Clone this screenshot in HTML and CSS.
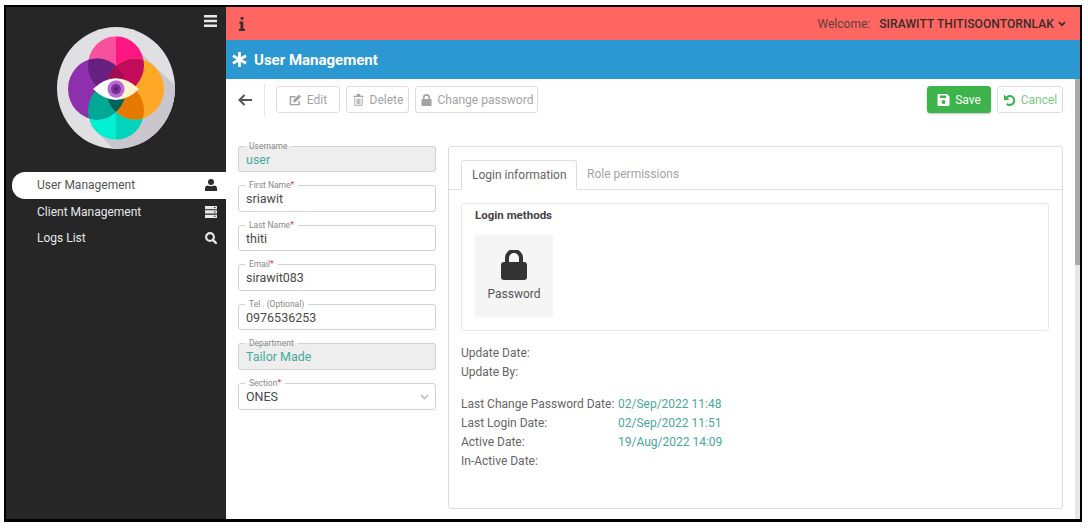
FILE: index.html
```html
<!DOCTYPE html>
<html lang="en">
<head>
  <meta charset="UTF-8">
  <meta name="viewport" content="width=device-width, initial-scale=1.0">
  <title>User Management</title>
  <link rel="stylesheet" href="styles.css">
</head>
<body>
  <div class="frame">
    <aside class="sidebar">
      <div class="burger-row">
        <svg class="burger" viewBox="0 0 13 12"><path d="M0 0h13v2.4H0zM0 4.8h13v2.4H0zM0 9.600h13V12H0z" fill="#e8e8e8"/></svg>
      </div>
      <svg class="logo" viewBox="0 0 118 118" preserveAspectRatio="none">
        <defs>
          <clipPath id="disc"><circle cx="59" cy="59" r="59"/></clipPath>
          <clipPath id="cTop"><ellipse cx="59" cy="37" rx="28" ry="28"/></clipPath>
          <clipPath id="cBottom"><ellipse cx="59" cy="81" rx="28" ry="28"/></clipPath>
          <clipPath id="cLeft"><ellipse cx="40" cy="60" rx="29" ry="29.500"/></clipPath>
        </defs>
        <circle cx="59" cy="59" r="59" fill="#e0e0e3"/>
        <polygon clip-path="url(#disc)" points="86,27 130,68 130,130 70,131 33,95" fill="#c9c7cd"/>
        <rect x="31" y="9" width="28" height="56" fill="#f8509c" clip-path="url(#cTop)"/>
        <rect x="59" y="9" width="28" height="56" fill="#ff1683" clip-path="url(#cTop)"/>
        <rect x="31" y="53" width="28" height="56" fill="#00f0d2" clip-path="url(#cBottom)"/>
        <rect x="59" y="53" width="28" height="56" fill="#00d4ba" clip-path="url(#cBottom)"/>
        <ellipse cx="40" cy="60" rx="29" ry="29.500" fill="#8e30ae"/>
        <ellipse cx="78" cy="60" rx="29" ry="29.500" fill="#ffa726"/>
        <g clip-path="url(#cTop)">
          <ellipse cx="40" cy="60" rx="29" ry="29.500" fill="#66207f"/>
          <ellipse cx="78" cy="60" rx="29" ry="29.500" fill="#c40c5c"/>
          <g clip-path="url(#cLeft)"><ellipse cx="78" cy="60" rx="29" ry="29.500" fill="#a30c50"/></g>
        </g>
        <g clip-path="url(#cBottom)">
          <ellipse cx="40" cy="60" rx="29" ry="29.500" fill="#00a896"/>
          <ellipse cx="78" cy="60" rx="29" ry="29.500" fill="#e67a00"/>
          <g clip-path="url(#cLeft)"><ellipse cx="78" cy="60" rx="29" ry="29.500" fill="#00625f"/></g>
        </g>
        <path d="M36 60Q47 49.500 59 49.500V70.500Q47 70.500 36 60Z" fill="#fff"/>
        <path d="M59 49.500Q71 49.500 82 60Q71 70.500 59 70.500Z" fill="#fff4d0"/>
        <circle cx="59" cy="60" r="8.500" fill="#b86ad6"/>
        <circle cx="59" cy="60" r="5" fill="#7a3098"/>
        <circle cx="59" cy="60" r="2" fill="#5a1f78"/>
      </svg>
      <nav class="nav">
        <a class="nav-item active">User Management
          <svg class="nav-icon" viewBox="0 0 12 12"><circle cx="6" cy="3" r="3" fill="#2b2b2b"/><path d="M0 12V9.200Q0 6.600 2.500 6.400Q6 8 9.500 6.400Q12 6.600 12 9.200V12Z" fill="#2b2b2b"/></svg>
        </a>
        <a class="nav-item">Client Management
          <svg class="nav-icon" viewBox="0 0 12 12"><path d="M0 0h12v3.300H0zM0 4.300h12v3.300H0zM0 8.700h12V12H0z" fill="#e8e8e8"/><path d="M9 1h1.500v1H9zM9 5.400h1.500v1H9zM9 9.800h1.500v1H9z" fill="#262626"/></svg>
        </a>
        <a class="nav-item">Logs List
          <svg class="nav-icon" viewBox="0 0 12 12"><circle cx="5" cy="5" r="3.900" fill="none" stroke="#e8e8e8" stroke-width="2.100"/><path d="M7.800 7.800 11 11" stroke="#e8e8e8" stroke-width="2.400" stroke-linecap="round"/></svg>
        </a>
      </nav>
    </aside>

    <main class="main">
      <header class="topbar">
        <svg class="info" viewBox="0 0 6 14"><path d="M1.600 0h2.800v2.800H1.600zM.4 4.500h3.900v7.300H6V14H0v-2.200h1.500V6.700H.4z" fill="#3a2c2c"/></svg>
        <span class="welcome">Welcome:</span>
        <b class="username">SIRAWITT THITISOONTORNLAK</b>
        <svg class="caret" viewBox="0 0 8 6"><path d="M1 1.200 4 4.200 7 1.200" fill="none" stroke="#3a2c2c" stroke-width="1.700"/></svg>
      </header>
      <div class="titlebar">
        <svg class="asterisk" viewBox="0 0 14 14"><path d="M7 0v14M.9 3.500 13.100 10.500M13.100 3.500 .9 10.500" stroke="#fff" stroke-width="2.600"/></svg>
        <span>User Management</span>
      </div>

      <div class="body">
        <div class="content">
          <div class="toolbar">
            <svg class="back" viewBox="0 0 14 12"><path d="M6.500 1 1.500 6 6.500 11M2 6H14" fill="none" stroke="#555" stroke-width="2"/></svg>
            <span class="divider"></span>
            <button class="btn edit">
              <svg class="btn-icon" viewBox="0 0 14 13"><path d="M11 7.500V11.500H1.500V3H7" fill="none" stroke="#a3a3a3" stroke-width="1.600"/><path d="M4.500 9.200 5 6.300 10.700.6 13 2.900 7.300 8.600Z" fill="#a3a3a3"/></svg>
              Edit
            </button>
            <button class="btn delete">
              <svg class="btn-icon" viewBox="0 0 11 13"><path d="M0 2h11v1.300H0zM3.500 0h4v2h-4z" fill="#a3a3a3"/><path d="M1.500 4v8.300h8V4M4 5v6M5.500 5v6M7 5v6" fill="none" stroke="#a3a3a3" stroke-width="1"/></svg>
              Delete
            </button>
            <button class="btn password">
              <svg class="btn-icon" viewBox="0 0 11 13"><rect y="5.500" width="11" height="7.500" rx="1" fill="#a3a3a3"/><path d="M2.500 6V4a3 3 0 0 1 6 0v2" fill="none" stroke="#a3a3a3" stroke-width="1.800"/></svg>
              Change password
            </button>
            <button class="btn save">
              <svg class="btn-icon" viewBox="0 0 12 12"><path d="M1 0h8.500L12 2.500V11a1 1 0 0 1-1 1H1a1 1 0 0 1-1-1V1a1 1 0 0 1 1-1Z" fill="#fff"/><rect x="2.500" y="1.500" width="6" height="2.500" fill="#3cb44b"/><circle cx="6" cy="8" r="2" fill="#3cb44b"/></svg>
              Save
            </button>
            <button class="btn cancel">
              <svg class="btn-icon" viewBox="0 0 13 13"><path d="M3 4.200A4.800 4.800 0 1 1 3.500 10.500" fill="none" stroke="#3cb44b" stroke-width="2.200"/><path d="M.5 .5v6h6z" fill="#3cb44b"/></svg>
              Cancel
            </button>
          </div>

          <div class="columns">
            <form class="user-form">
              <fieldset class="field locked"><legend>Username</legend><span class="value">user</span></fieldset>
              <fieldset class="field"><legend>First Name<i>*</i></legend><span class="value">sriawit</span></fieldset>
              <fieldset class="field"><legend>Last Name<i>*</i></legend><span class="value">thiti</span></fieldset>
              <fieldset class="field"><legend>Email<i>*</i></legend><span class="value">sirawit083</span></fieldset>
              <fieldset class="field"><legend>Tel . (Optional)</legend><span class="value">0976536253</span></fieldset>
              <fieldset class="field locked"><legend>Department</legend><span class="value">Tailor Made</span></fieldset>
              <fieldset class="field select"><legend>Section<i>*</i></legend><span class="value">ONES</span>
                <svg class="select-caret" viewBox="0 0 9 6"><path d="M1 1 4.500 4.500 8 1" fill="none" stroke="#bbb" stroke-width="1.600"/></svg>
              </fieldset>
            </form>

            <section class="panel">
              <div class="tabs">
                <span class="tab active">Login information</span>
                <span class="tab">Role permissions</span>
              </div>
              <div class="tab-body">
                <div class="methods">
                  <h4>Login methods</h4>
                  <div class="method">
                    <svg class="method-icon" viewBox="0 0 26 30"><rect y="12" width="26" height="18" rx="3" fill="#333"/><path d="M6 14V8a7 7 0 0 1 14 0v6" fill="none" stroke="#333" stroke-width="4"/></svg>
                    <span>Password</span>
                  </div>
                </div>
                <dl class="dates first">
                  <dt>Update Date:</dt><dd></dd>
                  <dt>Update By:</dt><dd></dd>
                </dl>
                <dl class="dates">
                  <dt>Last Change Password Date:</dt><dd>02/Sep/2022 11:48</dd>
                  <dt>Last Login Date:</dt><dd>02/Sep/2022 11:51</dd>
                  <dt>Active Date:</dt><dd>19/Aug/2022 14:09</dd>
                  <dt>In-Active Date:</dt><dd></dd>
                </dl>
              </div>
            </section>
          </div>
        </div>
        <div class="scrollbar"><div class="thumb"></div></div>
      </div>
    </main>
  </div>
</body>
</html>
```

FILE: styles.css
```css
* {
  box-sizing: border-box;
}
html, body {
  height: 100%;
  overflow: hidden;
}
body {
  margin: 0;
  padding: 5px 6px 6px 4px;
  background: white;
  font-family: Roboto, "Liberation Sans", sans-serif;
  font-size: 12px;
  color: #555;
}
.frame {
  display: flex;
  height: 517px;
  border: 2px solid #000;
  border-bottom-width: 3px;
  overflow: hidden;
}

/* sidebar */
.sidebar {
  width: 220px;
  flex: none;
  background: #262626;
}
.burger-row {
  display: flex;
  justify-content: flex-end;
  padding: 8px 9px 0 0;
}
.burger {
  width: 13px;
  height: 12px;
  display: block;
}
.logo {
  display: block;
  width: 118px;
  height: 122px;
  margin: 0 0 0 51px;
}
.nav {
  margin-top: 23px;
  padding-left: 6px;
}
.nav-item {
  display: flex;
  align-items: center;
  justify-content: space-between;
  height: 26.500px;
  padding: 0 9px 0 25px;
  color: #e8e8e8;
}
.nav-item.active {
  background: white;
  color: #555;
  border-radius: 13px 0 0 13px;
}
.nav-icon {
  width: 12px;
  height: 12px;
}

/* top bars */
.topbar {
  display: flex;
  align-items: center;
  height: 33px;
  padding: 0 14px 0 13px;
  background: #ff6661;
  color: #3a2c2c;
}
.info {
  width: 6px;
  height: 14px;
  margin-right: auto;
}
.welcome {
  margin-right: 9px;
  color: #5c4040;
}
.username {
  font-weight: 500;
  letter-spacing: 0.1px;
}
.caret {
  width: 8px;
  height: 6px;
  margin-left: 4px;
}
.titlebar {
  display: flex;
  align-items: center;
  gap: 7px;
  height: 39px;
  padding-left: 6px;
  background: #2b98d2;
  color: white;
  font-size: 15px;
  font-weight: 700;
}
.asterisk {
  width: 15px;
  height: 15px;
}

/* main */
.main {
  flex: 1;
  display: flex;
  flex-direction: column;
  min-width: 0;
}
.body {
  flex: 1;
  display: flex;
  min-height: 0;
}
.content {
  flex: 1;
  min-width: 0;
  padding: 4px 12px 0 12px;
}
.scrollbar {
  width: 5px;
  background: #e8e8e8;
}
.thumb {
  height: 186px;
  background: #aaa;
}

/* toolbar */
.toolbar {
  display: flex;
  align-items: center;
  gap: 6px;
  height: 33px;
}
.back {
  width: 14px;
  height: 12px;
}
.divider {
  width: 1px;
  height: 32px;
  margin: 0 5px 0 6px;
  background: #e6e6e6;
}
.btn {
  display: inline-flex;
  align-items: center;
  justify-content: center;
  gap: 5px;
  height: 27px;
  padding: 0;
  background: white;
  border: 1px solid #ddd;
  border-radius: 3px;
  font: inherit;
  color: #a3a3a3;
}
.edit { width: 64px; }
.delete { width: 63px; }
.password { width: 123px; }
.save {
  width: 64px;
  margin-left: auto;
  background: #3cb44b;
  border-color: #3cb44b;
  color: white;
  box-shadow: 0 1px 2px rgba(0,0,0,0.25);
}
.cancel {
  width: 66px;
  color: #7cc987;
}
.btn-icon {
  width: 13px;
  height: 12px;
}

/* form */
.columns {
  display: flex;
  gap: 12px;
  margin-top: 30px;
}
.user-form {
  width: 198px;
  flex: none;
  margin-top: -5.500px;
  display: flex;
  flex-direction: column;
  gap: 8.100px;
}
.field {
  position: relative;
  margin: 0;
  height: 31.500px;
  padding: 0 7px;
  border: 1px solid #d2d2d2;
  border-radius: 3px;
  line-height: 15px;
  font-size: 12.500px;
  color: #4a4a4a;
}
.field legend {
  margin-left: -1px;
  padding: 0 4px;
  font-size: 8.500px;
  line-height: 11px;
  color: #888;
}
.field legend i {
  color: #e0334c;
  font-style: normal;
}
.locked {
  background: #eee;
}
.locked .value {
  color: #4aa89c;
}
.select-caret {
  position: absolute;
  right: 6px;
  top: 5px;
  width: 9px;
  height: 6px;
}

/* panel */
.panel {
  flex: 1;
  height: 363px;
  border: 1px solid #ddd;
  border-radius: 3px;
}
.tabs {
  display: flex;
  height: 43px;
  padding: 13px 0 0 12px;
  border-bottom: 1px solid #ddd;
}
.tab {
  height: 30px;
  padding: 0 10px;
  line-height: 28px;
  white-space: nowrap;
  color: #a3a3a3;
}
.tab.active {
  width: 116px;
  background: white;
  border: 1px solid #ddd;
  border-bottom-color: white;
  border-radius: 3px 3px 0 0;
  color: #666;
}
.tab-body {
  padding: 13px 13px 0 12px;
}
.methods {
  height: 128px;
  padding: 5px 13px;
  border: 1px solid #e6e6e6;
  border-radius: 3px;
}
.methods h4 {
  margin: 0;
  font-size: 11.500px;
  font-weight: 700;
  line-height: 13px;
  color: #444;
}
.method {
  display: flex;
  flex-direction: column;
  align-items: center;
  width: 78px;
  height: 82px;
  margin-top: 13px;
  padding-top: 15px;
  background: #f5f5f5;
  border-radius: 2px;
}
.method-icon {
  width: 26px;
  height: 30px;
  margin-bottom: 7px;
}
.dates {
  display: grid;
  grid-template-columns: 157px auto;
  grid-auto-rows: 19px;
  margin: 0;
  line-height: 19px;
}
.dates.first {
  margin: 13px 0;
}
.dates dt {
  color: #666;
  white-space: nowrap;
}
.dates dd {
  margin: 0;
  color: #4aa89c;
}
```
